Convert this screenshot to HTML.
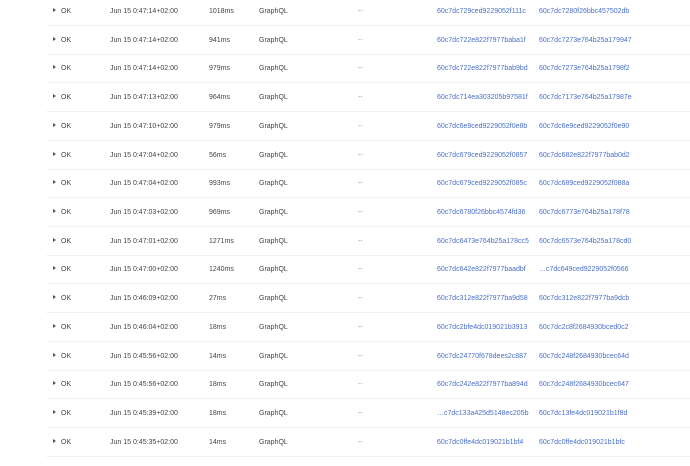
<!DOCTYPE html>
<html><head><style>
html,body{margin:0;padding:0;background:#fff;width:690px;height:466px;overflow:hidden;font-family:"Liberation Sans",Arial,sans-serif;font-size:7px;color:#444}
.r{position:absolute;left:46px;right:0;height:28.73px;border-bottom:1px solid #f2f2f2}
.r span{position:absolute;top:12px;white-space:nowrap}
.r span.a{left:7px;top:12px;width:0;height:0;border-left:3px solid #555;border-top:2.5px solid transparent;border-bottom:2.5px solid transparent}
.o{left:15px}.d{left:64px}.t{left:163px}.g{left:213px}.x{left:312px;color:#999}
.i{left:391px;color:#4a6fc8}.j{left:493px;color:#4a6fc8}
</style></head><body>
<div id="c"></div>
<script>
var rows=[
["Jun 15 0:47:14+02:00","1018ms","60c7dc729ced9229052f111c","60c7dc7280f26bbc457502db"],
["Jun 15 0:47:14+02:00","941ms","60c7dc722e822f7977baba1f","60c7dc7273e764b25a179947"],
["Jun 15 0:47:14+02:00","979ms","60c7dc722e822f7977bab9bd","60c7dc7273e764b25a1798f2"],
["Jun 15 0:47:13+02:00","964ms","60c7dc714ea303205b97581f","60c7dc7173e764b25a17987e"],
["Jun 15 0:47:10+02:00","979ms","60c7dc6e9ced9229052f0e8b","60c7dc6e9ced9229052f0e90"],
["Jun 15 0:47:04+02:00","56ms","60c7dc679ced9229052f0857","60c7dc682e822f7977bab0d2"],
["Jun 15 0:47:04+02:00","993ms","60c7dc679ced9229052f085c","60c7dc689ced9229052f088a"],
["Jun 15 0:47:03+02:00","969ms","60c7dc6780f26bbc4574fd36","60c7dc6773e764b25a178f78"],
["Jun 15 0:47:01+02:00","1271ms","60c7dc6473e764b25a178cc5","60c7dc6573e764b25a178cd0"],
["Jun 15 0:47:00+02:00","1240ms","60c7dc642e822f7977baadbf","…c7dc649ced9229052f0566"],
["Jun 15 0:46:09+02:00","27ms","60c7dc312e822f7977ba9d58","60c7dc312e822f7977ba9dcb"],
["Jun 15 0:46:04+02:00","18ms","60c7dc2bfe4dc019021b3913","60c7dc2c8f2684930bced0c2"],
["Jun 15 0:45:56+02:00","14ms","60c7dc24770f678dees2c887","60c7dc248f2684930bcec64d"],
["Jun 15 0:45:56+02:00","18ms","60c7dc242e822f7977ba894d","60c7dc248f2684930bcec647"],
["Jun 15 0:45:39+02:00","18ms","…c7dc133a425d5148ec205b","60c7dc13fe4dc019021b1f8d"],
["Jun 15 0:45:35+02:00","14ms","60c7dc0ffe4dc019021b1bf4","60c7dc0ffe4dc019021b1bfc"]];
var h="";
rows.forEach(function(r,k){
var top=Math.round(-4.1+28.73*k);
h+='<div class="r" style="top:'+top+'px"><span class="a"></span><span class="o">OK</span><span class="d">'+r[0]+'</span><span class="t">'+r[1]+'</span><span class="g">GraphQL</span><span class="x">--</span><span class="i">'+r[2]+'</span><span class="j">'+r[3]+'</span></div>';
});
document.getElementById("c").innerHTML=h;
</script>
</body></html>
